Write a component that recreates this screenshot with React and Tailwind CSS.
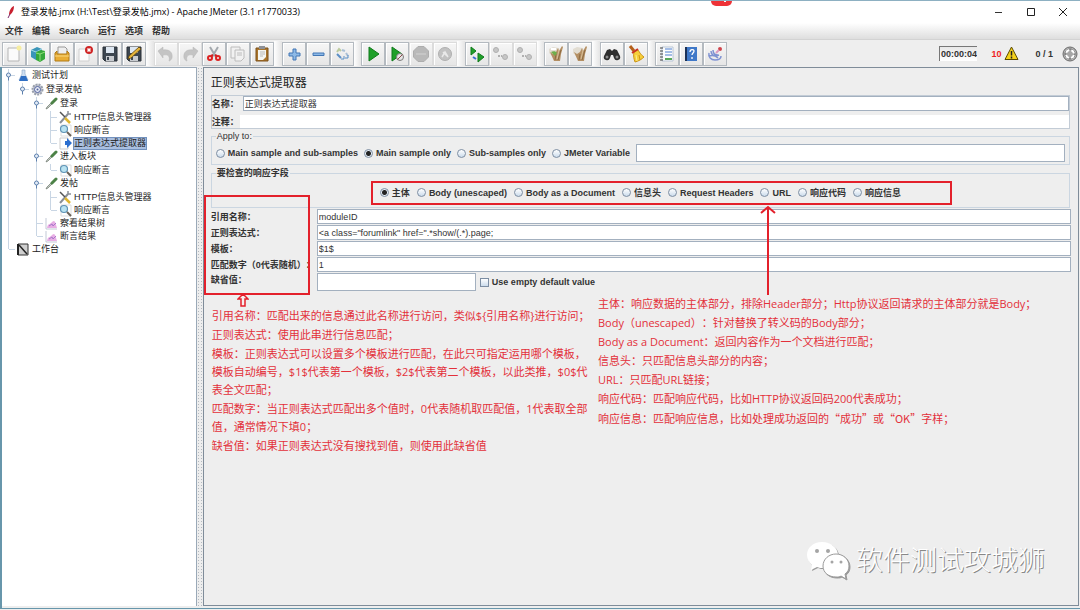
import React from 'react'

const PageShape = () => <path d="M4 4h11v13H4z" fill="#fbfbfb" stroke="#b5b5b5" />

const Floppy = () => (
    <>
        <path d="M3 3h14v14H5l-2-2z" fill="#3d4650" stroke="#2a3138" />
        <path d="M6 3h8v6H6z" fill="#dfe8f2" />
        <path d="M6 12h8v5H6z" fill="#c9ccd0" />
        <path d="M7 13h2v3H7z" fill="#3d4650" />
    </>
)

const Blobs = () => (
    <g fill="#c6c6c6" stroke="#b0b0b0">
        <circle cx="5" cy="6" r="2.500" />
        <circle cx="14" cy="13" r="2.500" />
        <path d="M7 12h4" strokeWidth="2" strokeDasharray="2 1" />
    </g>
)

const Brush = () => (
    <>
        <path d="M3 5l4-2 6 1 1 5-3 5-5-2-3-3z" fill="#e2ddd2" />
        <path d="M4 8l3 2 3-2 2-4 1 3 3-5 1 1-2 7-1 7H8z" fill="#b48f63" />
        <path d="M9 16l1-6M12 16l3-10" stroke="#8d6a41" />
        <path d="M11 15l2-9" stroke="#d9c09a" />
    </>
)

// Toolbar drawings, all on a 20x20 grid
const icons = {
    'New': (
        <>
            <PageShape />
            <circle cx="15" cy="4" r="2.500" fill="#f6eda0" />
        </>
    ),
    'Templates': (
        <>
            <path d="M3 6l6-3 5 2v8l-6 3-5-3z" fill="#3a95b8" />
            <path d="M3 6l5 2 6-3" stroke="#a6dbe8" fill="none" />
            <path d="M8 8l5-2 4 1v8l-5 3-4-2z" fill="#36a83a" />
            <path d="M8 9l4 1 5-2M12 10v7" stroke="#8fe07a" fill="none" />
        </>
    ),
    'Open': (
        <>
            <path d="M6 3h7l2 2v6H6z" fill="#eee" stroke="#999" />
            <path d="M3 9l2-2v3h10V7l2 2v8H3z" fill="#e9ad35" stroke="#b07a17" />
            <path d="M3 12h14" stroke="#f9d981" />
        </>
    ),
    'Close': (
        <>
            <path d="M3 5h10v12H3z" fill="#fbfbfb" stroke="#d0d0d0" />
            <circle cx="13" cy="6" r="4" fill="#cf2424" />
            <path d="M11.500 4.500l3 3m0-3l-3 3" stroke="#fff" strokeWidth="1.500" />
        </>
    ),
    'Save': <Floppy />,
    'Save as': (
        <>
            <Floppy />
            <path d="M4 15l1-3 10-9 2 2-10 9z" fill="#e6b53a" stroke="#5c4413" strokeWidth="0.800" />
        </>
    ),
    'Undo': <path d="M2 7l5-4v3c6-1 10 2 9 8-1 2-2 3-3 3 1-4 0-7-6-6v3z" fill="#c4c4c4" stroke="#b4b4b4" strokeWidth="0.500" />,
    'Redo': <path d="M18 7l-5-4v3C7 5 3 8 4 14c1 2 2 3 3 3-1-4 0-7 6-6v3z" fill="#c4c4c4" stroke="#b4b4b4" strokeWidth="0.500" />,
    'Cut': (
        <>
            <path d="M6 3l6 10M14 3L8 13" stroke="#a3a8ad" strokeWidth="2" />
            <path d="M9 11l-2 1M11 11l2 1" stroke="#cc2222" strokeWidth="2" />
            <circle cx="6" cy="14" r="2" fill="none" stroke="#d22" strokeWidth="2" />
            <circle cx="14" cy="14" r="2" fill="none" stroke="#d22" strokeWidth="2" />
        </>
    ),
    'Copy': (
        <g fill="#f1f1f1" stroke="#bcbcbc">
            <path d="M3 3h9v11H3z" />
            <path d="M7 6h9v8l-3 3H7z" />
            <path d="M9 9h5M9 11h5" />
        </g>
    ),
    'Paste': (
        <>
            <path d="M4 4h12v13H4z" fill="#a9752c" stroke="#7c5118" />
            <path d="M6 6h8v7l-3 3H6z" fill="#f5f5f0" />
            <path d="M7 2h6v3H7z" fill="#8d9096" />
            <path d="M8 8h5M8 10h5M8 12h3" stroke="#b9b9b9" />
        </>
    ),
    'Expand all': <path d="M9 5h3v4h4v3h-4v4H9v-4H5V9h4z" fill="#8db9e6" stroke="#4377b5" />,
    'Collapse all': <path d="M5 9h11v2.500H5z" fill="#8db9e6" stroke="#4377b5" />,
    'Toggle': (
        <>
            <path d="M5 8l2-3 2 2" stroke="#bccb9e" strokeWidth="2" />
            <path d="M5 10l4 4" stroke="#5b8fc6" strokeWidth="2" />
            <path d="M9 15h3v-3" stroke="#5b8fc6" />
            <path d="M10 6l3 1M14 9l2 3" stroke="#a9bfd6" strokeWidth="2" />
            <path d="M13 14h3v-3" stroke="#5b8fc6" />
        </>
    ),
    'Start': <path d="M6 3l10 7-10 7z" fill="#1fa02a" stroke="#107a1c" />,
    'Start no pauses': (
        <>
            <path d="M5 3l10 7-10 7z" fill="#1fa02a" stroke="#107a1c" />
            <circle cx="13" cy="13" r="3.500" fill="#e6e6e6" stroke="#7b7b7b" />
            <path d="M10.500 15.500l5-5" stroke="#8b4a4a" />
        </>
    ),
    'Stop': (
        <>
            <path d="M7 2.500h6L17.500 7v6L13 17.500H7L2.500 13V7z" fill="#b9b9b9" stroke="#adadad" />
            <path d="M5 10h10" stroke="#c6c6c6" strokeWidth="2" />
        </>
    ),
    'Shutdown': (
        <>
            <circle cx="10" cy="10" r="6.500" fill="#c2c2c2" stroke="#b0b0b0" />
            <path d="M7 13l3-5 3 5M8 8l4 4" stroke="#e9e9e9" strokeWidth="1.500" fill="none" />
        </>
    ),
    'Remote start all': (
        <>
            <path d="M4 3l5 4-5 4z" fill="#1fa02a" stroke="#107a1c" />
            <path d="M11 9l6 4-6 5z" fill="#1fa02a" stroke="#107a1c" />
            <path d="M6 13l3 2" stroke="#3a6fd0" strokeWidth="2" />
        </>
    ),
    'Remote stop all': <Blobs />,
    'Remote shutdown all': <Blobs />,
    'Clear': (
        <>
            <Brush />
            <path d="M5 8c2-1 5-1 6 1l-2 3z" fill="#6fae4b" />
            <path d="M5 5h5" stroke="#fff" strokeWidth="2" />
        </>
    ),
    'Clear all': <Brush />,
    'Search': (
        <>
            <path d="M5 6l3-1 2 2 2-2 3 1 3 6a3 3 0 0 1-6 2l-1-3H9l-1 3a3 3 0 0 1-6-2z" fill="#2e2e2e" />
            <circle cx="5" cy="13" r="1.500" fill="#8a8a8a" />
            <circle cx="15" cy="13" r="1.500" fill="#8a8a8a" />
        </>
    ),
    'Reset search': (
        <>
            <path d="M4 2l4 5" stroke="#b5601b" strokeWidth="3" />
            <path d="M8 8l4-2c2 3 3 5 6 7-2 2-5 4-9 5-1-3-2-6-1-10z" fill="#f6cf3a" stroke="#cc9516" />
            <path d="M6 9l6-4" stroke="#c93322" strokeWidth="2" />
            <path d="M10 11l1 6" stroke="#fbeb92" />
            <path d="M13 11l1 5" stroke="#cc9516" />
        </>
    ),
    'Function helper': (
        <>
            <path d="M5 3h11v14H5z" fill="#fdfdfd" stroke="#b7c5d6" />
            <path d="M3 4h3M3 7h3M3 10h3M3 13h3M3 16h3" stroke="#444" />
            <path d="M8 5h7M8 8h7M8 11h7" stroke="#4d7fd0" />
            <path d="M8 15h7" stroke="#58a85a" strokeWidth="2" />
        </>
    ),
    'Help': (
        <>
            <path d="M4 3h12v14H4z" fill="#3f78c8" />
            <path d="M4 3h2v14H4z" fill="#1b3157" />
            <path d="M9 8c0-3 4-3 4-1 0 2-2 2-2 4M11 13v2" stroke="#fff" strokeWidth="1.300" fill="none" />
        </>
    ),
    'Undock': (
        <>
            <path d="M4 9c-1 4 2 7 6 7s6-2 6-4M6 7c0 4 3 6 8 4M4 12c3-1 6-1 9 2M8 6c0 3 2 5 5 5" stroke="#7f92d2" strokeWidth="1.500" fill="none" />
            <circle cx="15" cy="5" r="2" fill="#d0454c" />
            <path d="M11 9l3-3" stroke="#dc9ac0" strokeWidth="2" />
        </>
    ),
}

const toolGroups = [
    ['New', 'Templates', 'Open', 'Close', 'Save', 'Save as'],
    ['Undo', 'Redo', 'Cut', 'Copy', 'Paste'],
    ['Expand all', 'Collapse all', 'Toggle'],
    ['Start', 'Start no pauses', 'Stop', 'Shutdown'],
    ['Remote start all', 'Remote stop all', 'Remote shutdown all'],
    ['Clear', 'Clear all'],
    ['Search', 'Reset search'],
    ['Function helper', 'Help', 'Undock'],
]

const disabledTools = ['Undo', 'Redo', 'Stop', 'Shutdown', 'Remote stop all', 'Remote shutdown all']

const treeIcons = {
    plan: (
        <>
            <path d="M5 1h3v4l3 6H2l3-6z" fill="#cfe0f3" stroke="#8aa5c4" strokeWidth="0.600" />
            <path d="M4 7h5l2 5H2z" fill="#2f6fc4" />
        </>
    ),
    group: (
        <>
            <circle cx="6.500" cy="6.500" r="5" fill="#c9cdd6" stroke="#9aa0ac" strokeWidth="2" strokeDasharray="2 1" />
            <circle cx="6.500" cy="6.500" r="3" fill="#e8ecf5" stroke="#5262a0" />
            <circle cx="6.500" cy="6.500" r="1" fill="#5262a0" />
        </>
    ),
    sampler: (
        <>
            <path d="M1 12l1-2 5-5 1 1-5 5z" fill="#c4ccc4" stroke="#6d776d" strokeWidth="0.700" />
            <path d="M7 6l4-4" stroke="#4c8246" strokeWidth="3" strokeLinecap="round" />
        </>
    ),
    config: (
        <>
            <path d="M1 12l8-9" stroke="#8a8f96" strokeWidth="2" />
            <path d="M9 0v3h3" stroke="#8a8f96" strokeWidth="1.500" fill="none" />
            <path d="M1 1l5 5" stroke="#555" strokeWidth="1.500" />
            <path d="M6 7l5 5" stroke="#dfb52f" strokeWidth="2.500" />
        </>
    ),
    assertion: (
        <>
            <path d="M2 1h10v11H2z" fill="#fff" stroke="#ddd" />
            <circle cx="5" cy="5" r="3.500" fill="#b9e2f0" stroke="#5f93b5" strokeWidth="1.200" />
            <path d="M8 8l4 4" stroke="#6a6258" strokeWidth="2" />
        </>
    ),
    extractor: (
        <>
            <path d="M1 1h8v11H1z" fill="#fff" stroke="#ccc" />
            <path d="M6 4h2V1l5 5-5 5V8H6z" fill="#2c6fcf" />
        </>
    ),
    listener: (
        <>
            <path d="M1 1v11h11" stroke="#c3c9d6" fill="none" />
            <path d="M2 11c1-5 2-3 4-5s3-3 4-1 1 3 2 6z" fill="#e8aee4" />
            <path d="M4 9l3-2 1 2 3-3" stroke="#a878cc" fill="none" />
        </>
    ),
    bench: (
        <>
            <path d="M1 1h10v11H1z" fill="#cfcfcf" stroke="#333" />
            <path d="M2 2l8 9" stroke="#222" strokeWidth="1.500" />
            <path d="M1 1v11" stroke="#222" strokeWidth="2" />
        </>
    ),
}

const tree = [
    {
        label: '测试计划', icon: 'plan', children: [
            {
                label: '登录发帖', icon: 'group', children: [
                    {
                        label: '登录', icon: 'sampler', children: [
                            { label: 'HTTP信息头管理器', icon: 'config' },
                            { label: '响应断言', icon: 'assertion' },
                            { label: '正则表达式提取器', icon: 'extractor', selected: true },
                        ],
                    },
                    {
                        label: '进入板块', icon: 'sampler', children: [
                            { label: '响应断言', icon: 'assertion' },
                        ],
                    },
                    {
                        label: '发帖', icon: 'sampler', children: [
                            { label: 'HTTP信息头管理器', icon: 'config' },
                            { label: '响应断言', icon: 'assertion' },
                        ],
                    },
                    { label: '察看结果树', icon: 'listener' },
                    { label: '断言结果', icon: 'listener' },
                ],
            },
        ],
    },
    { label: '工作台', icon: 'bench' },
]

const TreeNode = ({ node, last }) => (
    <li className="relative">
        <span className={`absolute left-[6px] top-0 w-px bg-[#c9d6e4] ${last ? 'h-[6px]' : 'h-full'}`} />
        <div className="relative flex h-[13px] items-center">
            <svg className="h-[13px] w-[15px] shrink-0" viewBox="0 0 15 13">
                {node.children ? (
                    <>
                        <path d="M9 6.500h4" stroke="#c9d6e4" />
                        <circle cx="6.500" cy="6" r="2" fill="#e3ecf7" stroke="#5d80ad" />
                        <path d="M6.500 8v3.500" stroke="#5d80ad" />
                    </>
                ) : (
                    <path d="M7 6.500h6" stroke="#c9d6e4" />
                )}
            </svg>
            <svg className="h-[13px] w-[13px] shrink-0" viewBox="0 0 13 13">{treeIcons[node.icon]}</svg>
            <span
                className={
                    node.selected
                        ? 'ml-px border border-[#7291bd] bg-[#a9bfe0] leading-[11px] whitespace-nowrap'
                        : 'ml-0.5 leading-[13px] whitespace-nowrap'
                }
            >
                {node.label}
            </span>
        </div>
        {node.children && (
            <ul className="mt-px ml-3.5">
                {node.children.map((child, i) => (
                    <TreeNode key={i} node={child} last={i === node.children.length - 1} />
                ))}
            </ul>
        )}
    </li>
)

const Radio = ({ name, label, checked }) => (
    <label className="flex items-center gap-[3px] font-bold whitespace-nowrap">
        <input
            type="radio"
            name={name}
            defaultChecked={checked}
            className="h-[9px] w-[9px] appearance-none rounded-full border border-[#7d8ea3] bg-linear-to-b from-white to-[#ccdcec] checked:bg-[radial-gradient(circle,#222_0_2px,#e6edf5_3px)]"
        />
        {label}
    </label>
)

const TitleBar = () => (
    <header className="flex h-[22px] items-center bg-white pl-[7px] font-['Open_Sans','Noto_Sans_CJK_SC',sans-serif]">
        <svg className="h-3 w-2" viewBox="0 0 8 12">
            <path d="M7 0C4 1 2 5 2 9l2-1c2-2 3-5 3-8z" fill="#c8202f" />
            <path d="M3 8l-2 4" stroke="#7b2a6b" />
        </svg>
        <h1 className="ml-1.5 text-[9px] whitespace-nowrap text-black">
            登录发帖.jmx (H:\Test\登录发帖.jmx) - Apache JMeter (3.1 r1770033)
        </h1>
        <div className="ml-auto flex pr-px">
            <button aria-label="Minimize" className="flex h-4 w-8 items-center justify-center">
                <svg className="h-2 w-2" viewBox="0 0 8 8"><path d="M0 4.500h7" stroke="#333" /></svg>
            </button>
            <button aria-label="Maximize" className="flex h-4 w-8 items-center justify-center">
                <svg className="h-2 w-2" viewBox="0 0 8 8"><path d="M.5.5h7v7h-7z" stroke="#222" fill="none" /></svg>
            </button>
            <button aria-label="Close window" className="flex h-4 w-8 items-center justify-center">
                <svg className="h-2 w-2" viewBox="0 0 8 8"><path d="M0 0l8 8M8 0L0 8" stroke="#222" /></svg>
            </button>
        </div>
        {/* Recorder badge hanging from the screen edge */}
        <span className="absolute top-0 left-[66%] ml-[-2px] flex h-[5px] w-[21px] justify-center rounded-b-md bg-[#ee3338]">
            <span className="ml-2 h-px w-0.5 bg-white" />
        </span>
    </header>
)

const MenuBar = () => (
    <nav className="flex h-[17px] items-center gap-[9px] border-b border-[#d3d3d3] bg-linear-to-b from-white to-[#dedede] pl-[5px] font-bold">
        {['文件', '编辑', 'Search', '运行', '选项', '帮助'].map((item) => (
            <button key={item} className="leading-[14px]">{item}</button>
        ))}
    </nav>
)

const Toolbar = () => (
    <div className="flex h-[27px] items-center pr-0.5 pl-0.5">
        {toolGroups.map((group, i) => (
            <React.Fragment key={i}>
                {i > 0 && (
                    <div className={`h-[25px] bg-linear-to-r from-white to-[#e4e4e4] ${i % 2 && i > 2 ? 'w-[7px]' : 'w-2'}`} />
                )}
                <div className="flex">
                    {group.map((tool) => (
                        <button
                            key={tool}
                            title={tool}
                            aria-label={tool}
                            disabled={disabledTools.includes(tool)}
                            className="flex h-6 w-6 items-center justify-center border border-[#b4bac0] bg-linear-to-b from-[#f6f6f6] to-[#e6e6e6] shadow-[inset_1px_1px_0_#fff] disabled:border-[#dcdcdc]"
                        >
                            <svg className="h-5 w-5" viewBox="0 0 20 20" fill="none">{icons[tool]}</svg>
                        </button>
                    ))}
                </div>
            </React.Fragment>
        ))}
        <div className="ml-auto flex items-center font-bold">
            <input
                aria-label="Elapsed time"
                readOnly
                value="00:00:04"
                className="h-[15px] w-[38px] border-t border-l border-[#777] bg-linear-to-b from-[#e8e8e8] to-white text-center text-[#333]"
            />
            <span className="ml-3.5 text-[#ee1c25]">10</span>
            <svg className="ml-[3px] h-[15px] w-[15px]" viewBox="0 0 15 15">
                <path d="M7.500 1l6.500 12.500H1z" fill="#f5d21c" stroke="#5a4a00" strokeLinejoin="round" />
                <path d="M7.500 5v4.500M7.500 10.500v2" stroke="#222" strokeWidth="1.500" />
            </svg>
            <span className="ml-4">0 / 1</span>
            <svg className="ml-[9px] h-4 w-4" viewBox="0 0 16 16">
                <circle cx="8" cy="8" r="7" fill="#b4b4b4" stroke="#6b6b6b" />
                <circle cx="8" cy="8" r="5" stroke="#666" strokeWidth="1" fill="none" />
                <circle cx="8" cy="8" r="4" fill="#a6a6a6" stroke="#fff" strokeWidth="2" strokeDasharray="4 2.280" strokeDashoffset="-1" />
            </svg>
        </div>
    </div>
)

const fieldClass = 'min-w-0 border border-[#a3b0bf] bg-white px-px font-normal text-[#333]'

const params = [
    { id: 'refname', label: '引用名称：', value: 'moduleID' },
    { id: 'regex', label: '正则表达式：', value: '<a class="forumlink" href=".*show/(.*).page;' },
    { id: 'template', label: '模板：', value: '$1$' },
    { id: 'match', label: '匹配数字（0代表随机）：', value: '1' },
]

const leftNotes = [
    ['引用名称：匹配出来的信息通过此名称进行访问，类似${引用名称}进行访问；'],
    ['正则表达式：使用此串进行信息匹配；'],
    [
        '模板：正则表达式可以设置多个模板进行匹配，在此只可指定运用哪个模板，',
        '模板自动编号，$1$代表第一个模板，$2$代表第二个模板，以此类推，$0$代',
        '表全文匹配；',
    ],
    ['匹配数字：当正则表达式匹配出多个值时，0代表随机取匹配值，1代表取全部', '值，通常情况下填0；'],
    ['缺省值：如果正则表达式没有搜找到值，则使用此缺省值'],
]

const rightNotes = [
    ['主体：响应数据的主体部分，排除Header部分；Http协议返回请求的主体部分就是Body；'],
    ['Body（unescaped）：针对替换了转义码的Body部分；'],
    ['Body as a Document：返回内容作为一个文档进行匹配；'],
    ['信息头：只匹配信息头部分的内容；'],
    ['URL：只匹配URL链接；'],
    ['响应代码：匹配响应代码，比如HTTP协议返回码200代表成功；'],
    [
        <>
            响应信息：匹配响应信息，比如处理成功返回的
            <span className="font-['Noto_Sans_CJK_SC',sans-serif]">“成功”或“OK”</span>
            字样；
        </>,
    ],
]

const Notes = ({ items }) => (
    <div className="flex flex-col gap-px">
        {items.map((lines, i) => (
            <p key={i}>
                {lines.map((line, j) => (
                    <span key={j} className="block h-[18px] whitespace-nowrap">{line}</span>
                ))}
            </p>
        ))}
    </div>
)

const ExtractorPanel = () => (
    <main className="relative flex-1 border border-[#7f8c99] bg-[#eeeeee] px-[7px] pt-[7px]">
        <h2 className="text-[12px] leading-4 text-[#222]">正则表达式提取器</h2>

        <div className="mt-1 mr-px flex flex-col gap-1 border border-[#c3ccd6]">
            <div className="flex h-[15px] items-center">
                <label htmlFor="name" className="w-[31px] font-bold whitespace-nowrap">名称：</label>
                <input id="name" defaultValue="正则表达式提取器" className={`${fieldClass} h-[15px] flex-1`} />
            </div>
            <div className="flex h-[13px] items-center">
                <label htmlFor="comment" className="w-7 font-bold whitespace-nowrap">注释：</label>
                <input id="comment" className="h-[13px] min-w-0 flex-1 bg-white" />
            </div>
        </div>

        <fieldset className="mt-0.5 mr-px border border-[#cbd6e1] px-1 pt-[3px] pb-0.5">
            <legend className="px-px leading-[10px]">Apply to:</legend>
            <div className="flex items-center gap-1.5">
                <Radio name="scope" label="Main sample and sub-samples" />
                <Radio name="scope" label="Main sample only" checked />
                <Radio name="scope" label="Sub-samples only" />
                <Radio name="scope" label="JMeter Variable" />
                <input aria-label="JMeter Variable name" className={`${fieldClass} h-[18px] flex-1`} />
            </div>
        </fieldset>

        <fieldset className="mt-[3px] mr-px border border-[#cbd6e1] px-1">
            <legend className="px-px leading-[10px] font-bold">要检查的响应字段</legend>
            <div className="flex h-[29px] items-center justify-center">
                <div className="relative flex items-center gap-[7px]">
                    <Radio name="field" label="主体" checked />
                    <Radio name="field" label="Body (unescaped)" />
                    <Radio name="field" label="Body as a Document" />
                    <Radio name="field" label="信息头" />
                    <Radio name="field" label="Request Headers" />
                    <Radio name="field" label="URL" />
                    <Radio name="field" label="响应代码" />
                    <Radio name="field" label="响应信息" />
                    <div className="pointer-events-none absolute -top-[5px] -right-[51px] -left-[9px] z-10 h-6 border-2 border-[#e3202b]">
                        <svg className="absolute top-full left-[67%] mt-0.5 h-[90px] w-4" viewBox="0 0 16 90" fill="none">
                            <path d="M8 2v88M1 8l7-6 7 6" stroke="#e3202b" strokeWidth="2" />
                        </svg>
                    </div>
                </div>
            </div>
        </fieldset>

        <div className="relative mt-px flex flex-col gap-px">
            {params.map((p) => (
                <div key={p.id} className="flex h-[15px] items-center">
                    <label htmlFor={p.id} className="w-[106px] font-bold whitespace-nowrap">{p.label}</label>
                    <input id={p.id} defaultValue={p.value} className={`${fieldClass} h-[15px] flex-1`} />
                </div>
            ))}
            <div className="flex items-center">
                <label htmlFor="default" className="w-[106px] self-start font-bold">缺省值：</label>
                <input id="default" className={`${fieldClass} h-[18px] w-[159px]`} />
                <label className="ml-1 flex items-center gap-[3px] font-bold">
                    <input
                        type="checkbox"
                        className="h-[9px] w-[9px] appearance-none border border-[#7d8ea3] bg-linear-to-b from-white to-[#ccdcec] checked:bg-[#4a6a94]"
                    />
                    Use empty default value
                </label>
            </div>
            <div className="pointer-events-none absolute -top-[14px] -left-[7px] h-[100px] w-[106px] border-2 border-[#e3202b]">
                <svg className="absolute top-full left-[31px] h-[14px] w-3" viewBox="0 0 12 14">
                    <path d="M6 1l5 5H8v7H4V6H1z" fill="#f6eeee" stroke="#e3202b" strokeWidth="1.500" />
                </svg>
            </div>
        </div>

        {/* Field explanations */}
        <div className="mt-1 flex font-['Open_Sans','Noto_Sans_CJK_SC',sans-serif] text-[11px] leading-[18px] text-[#e3303a]">
            <div className="w-[45%] pt-3 pl-px">
                <Notes items={leftNotes} />
            </div>
            <Notes items={rightNotes} />
        </div>

        <div className="absolute right-[33px] bottom-6 flex items-center gap-1.5">
            <svg className="h-10 w-[44px] drop-shadow-[1px_1px_0_#999]" viewBox="0 0 44 40">
                <path d="M16 1C7 1 1 7 1 14c0 4 2 7 5 10l-1 5 6-3c2 1 4 1 6 1 9 0 15-6 15-13S25 1 16 1z" fill="#fff" />
                <path d="M30 13c-7 0-13 5-13 12s6 11 13 11c2 0 4 0 5-1l5 3-1-5c3-2 4-5 4-8 0-7-6-12-13-12z" fill="#fff" stroke="#9b9b9b" />
                <g fill="#a5a5a5">
                    <circle cx="11" cy="10" r="2" />
                    <circle cx="22" cy="10" r="2" />
                    <circle cx="26" cy="21" r="1.500" />
                    <circle cx="35" cy="21" r="1.500" />
                </g>
            </svg>
            <span className="text-[27px] leading-8 font-light text-white [text-shadow:1px_1px_0_#888]">软件测试攻城狮</span>
        </div>
    </main>
)

const App = () => {
    return (
        <div className="relative flex min-h-screen flex-col border-t border-[#8db0c2] bg-[#eeeeee] font-['Liberation_Sans','Noto_Sans_CJK_SC',sans-serif] text-[9px] leading-[14px] text-[#333] [text-spacing-trim:space-all]">
            <TitleBar />
            <MenuBar />
            <Toolbar />
            <div className="mb-px flex flex-1 border-b border-l-2 border-[#6796ab] pr-px pb-0.5">
                <aside className="w-[18%] border-t border-[#9aa9b8] bg-white pt-px text-[#222]">
                    <ul>
                        {tree.map((node, i) => (
                            <TreeNode key={i} node={node} last={i === tree.length - 1} />
                        ))}
                    </ul>
                </aside>
                {/* Splitter */}
                <div className="w-[7px] border-l border-[#9aa9b8] bg-[radial-gradient(#b3b9bf_1px,transparent_1px)] bg-[length:3px_3px]" />
                <ExtractorPanel />
            </div>
        </div>
    )
}

export default App
